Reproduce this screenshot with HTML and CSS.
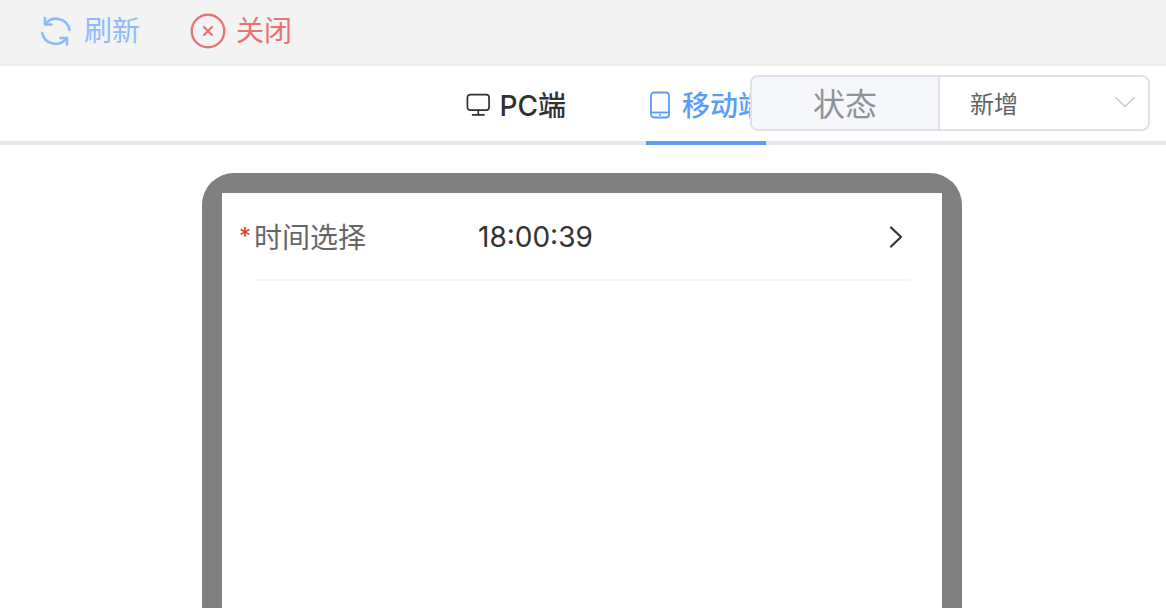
FILE: index.html
```html
<!DOCTYPE html>
<html lang="zh-CN">
<head>
    <meta charset="UTF-8">
    <title>表单预览</title>
    <link rel="stylesheet" href="styles.css">
</head>
<body>
<div class="toolbar">
    <a class="tool tool-refresh">
        <svg class="tool-icon" width="32" height="32" viewBox="0 0 32 32" fill="none" stroke="currentColor" stroke-width="2.6" stroke-linecap="round" stroke-linejoin="round">
            <path d="M5.5 9A13.5 13.5 0 0 1 29.5 15"/>
            <path d="M2.2 18A13.5 13.5 0 0 0 26.5 23"/>
            <path d="M5 3V9.5H11.5"/>
            <path d="M27 29.5V23H20.5"/>
        </svg>
        <span>刷新</span>
    </a>
    <a class="tool tool-close">
        <svg class="tool-icon" width="36" height="36" viewBox="0 0 36 36" fill="none" stroke="currentColor" stroke-linecap="round">
            <circle cx="18" cy="18" r="16.3" stroke-width="2.4"/>
            <path d="M14 14L22 22M22 14L14 22" stroke-width="2.2"/>
        </svg>
        <span>关闭</span>
    </a>
</div>

<div class="tabs">
    <div class="tab">
        <svg width="26" height="26" viewBox="0 0 26 26" fill="none" stroke="currentColor" stroke-width="1.8" stroke-linecap="round" stroke-linejoin="round">
            <rect x="1.5" y="2" width="23" height="16.5" rx="3"/>
            <path d="M13 18.5V23.5M7 23.5H19"/>
        </svg>
        <span>PC端</span>
    </div>
    <div class="tab tab-active">
        <svg width="20" height="28" viewBox="0 0 20 28" fill="none" stroke="currentColor" stroke-width="1.8" stroke-linejoin="round">
            <rect x="1" y="1.5" width="18" height="25" rx="3"/>
            <path d="M1 21.5H19"/>
            <circle cx="10" cy="24" r="0.7" fill="currentColor" stroke-width="0.8"/>
        </svg>
        <span>移动端</span>
    </div>
    <div class="status">
        <div class="status-label">状态</div>
        <div class="status-select">
            <span>新增</span>
            <svg width="22" height="12" viewBox="0 0 22 12" fill="none" stroke="currentColor" stroke-width="1.4" stroke-linecap="round" stroke-linejoin="round">
                <path d="M1.5 1.5L11 10.5L20.5 1.5"/>
            </svg>
        </div>
    </div>
</div>

<div class="preview">
    <div class="phone">
        <div class="phone-screen">
            <div class="field">
                <span class="required">*</span>
                <div class="field-body">
                    <span class="field-label">时间选择</span>
                    <span class="field-value">18:00:39</span>
                    <svg class="field-arrow" width="16" height="24" viewBox="0 0 16 24" fill="none" stroke="currentColor" stroke-width="2.2" stroke-linecap="round" stroke-linejoin="round">
                        <path d="M3 2.5L13 12L3 21.5"/>
                    </svg>
                </div>
            </div>
        </div>
    </div>
</div>
</body>
</html>
```

FILE: styles.css
```css
* {
    box-sizing: border-box;
}

html,
body {
    height: 100%;
}

body {
    display: flex;
    flex-direction: column;
    margin: 0;
    overflow: hidden;
    background-color: #fff;
    font-family: Inter, "Noto Sans CJK SC", sans-serif;
}

.toolbar {
    display: flex;
    align-items: center;
    height: 66px;
    padding: 0 0 2px 40px;
    background-color: #f3f3f3;
    border-bottom: 2px solid #eeebeb;
}

.tool {
    display: flex;
    align-items: center;
    font-size: 28px;
    line-height: 32px;
}

.tool span {
    margin-top: -1px;
}

.tool-refresh {
    gap: 12px;
    margin-right: 50px;
    color: #8dbcfb;
}

.tool-close {
    gap: 10px;
    color: #e87373;
}

.tabs {
    position: relative;
    display: flex;
    height: 79px;
    padding-left: 446px;
    border-bottom: 4px solid #e4e7ed;
}

.tab {
    display: flex;
    align-items: center;
    gap: 9px;
    width: 120px;
    height: 79px;
    padding: 0 0 2px 20px;
    font-size: 28px;
    font-weight: 500;
    line-height: 32px;
    white-space: nowrap;
    color: #303133;
}

.tab span {
    margin-top: 2px;
}

.tab + .tab {
    margin-left: 80px;
}

.tab-active {
    gap: 12px;
    padding: 2px 0 0 4px;
    overflow: hidden;
    color: #5a9cf8;
    border-bottom: 4px solid #5a9cf8;
}

.status {
    position: absolute;
    top: 9px;
    left: 750px;
    display: flex;
    width: 400px;
    height: 56px;
    background-color: #fff;
    border: 2px solid #dfe1e8;
    border-radius: 8px;
}

.status-label {
    display: flex;
    align-items: center;
    justify-content: center;
    width: 188px;
    padding-bottom: 3px;
    font-size: 32px;
    color: #909399;
    background-color: #f5f7fa;
    border-right: 2px solid #dfe1e8;
    border-radius: 6px 0 0 6px;
}

.status-select {
    flex: 1;
    display: flex;
    align-items: center;
    justify-content: space-between;
    padding: 0 12px 2px 30px;
    font-size: 24px;
    color: #606266;
}

.status-select svg {
    color: #c6c9d0;
}

.preview {
    flex: 1;
    display: flex;
    justify-content: center;
    min-height: 0;
    padding: 28px 2px 0 0;
}

.phone {
    width: 760px;
    padding: 20px 20px 0;
    background-color: #808080;
    border-radius: 32px 32px 0 0;
}

.phone-screen {
    height: 100%;
    background-color: #fff;
}

.field {
    display: flex;
    padding: 0 32px 0 17px;
}

.required {
    width: 15px;
    margin-top: 28px;
    font-size: 24px;
    line-height: 32px;
    color: #e5332f;
}

.field-body {
    flex: 1;
    display: flex;
    align-items: center;
    height: 88px;
    border-bottom: 2px solid #f4f4f4;
}

.field-label {
    width: 224px;
    font-size: 28px;
    color: #666;
}

.field-value {
    flex: 1;
    margin-top: 2px;
    font-size: 28px;
    color: #333;
}

.field-arrow {
    margin: 2px 6px 0 0;
    color: #333;
}
```
